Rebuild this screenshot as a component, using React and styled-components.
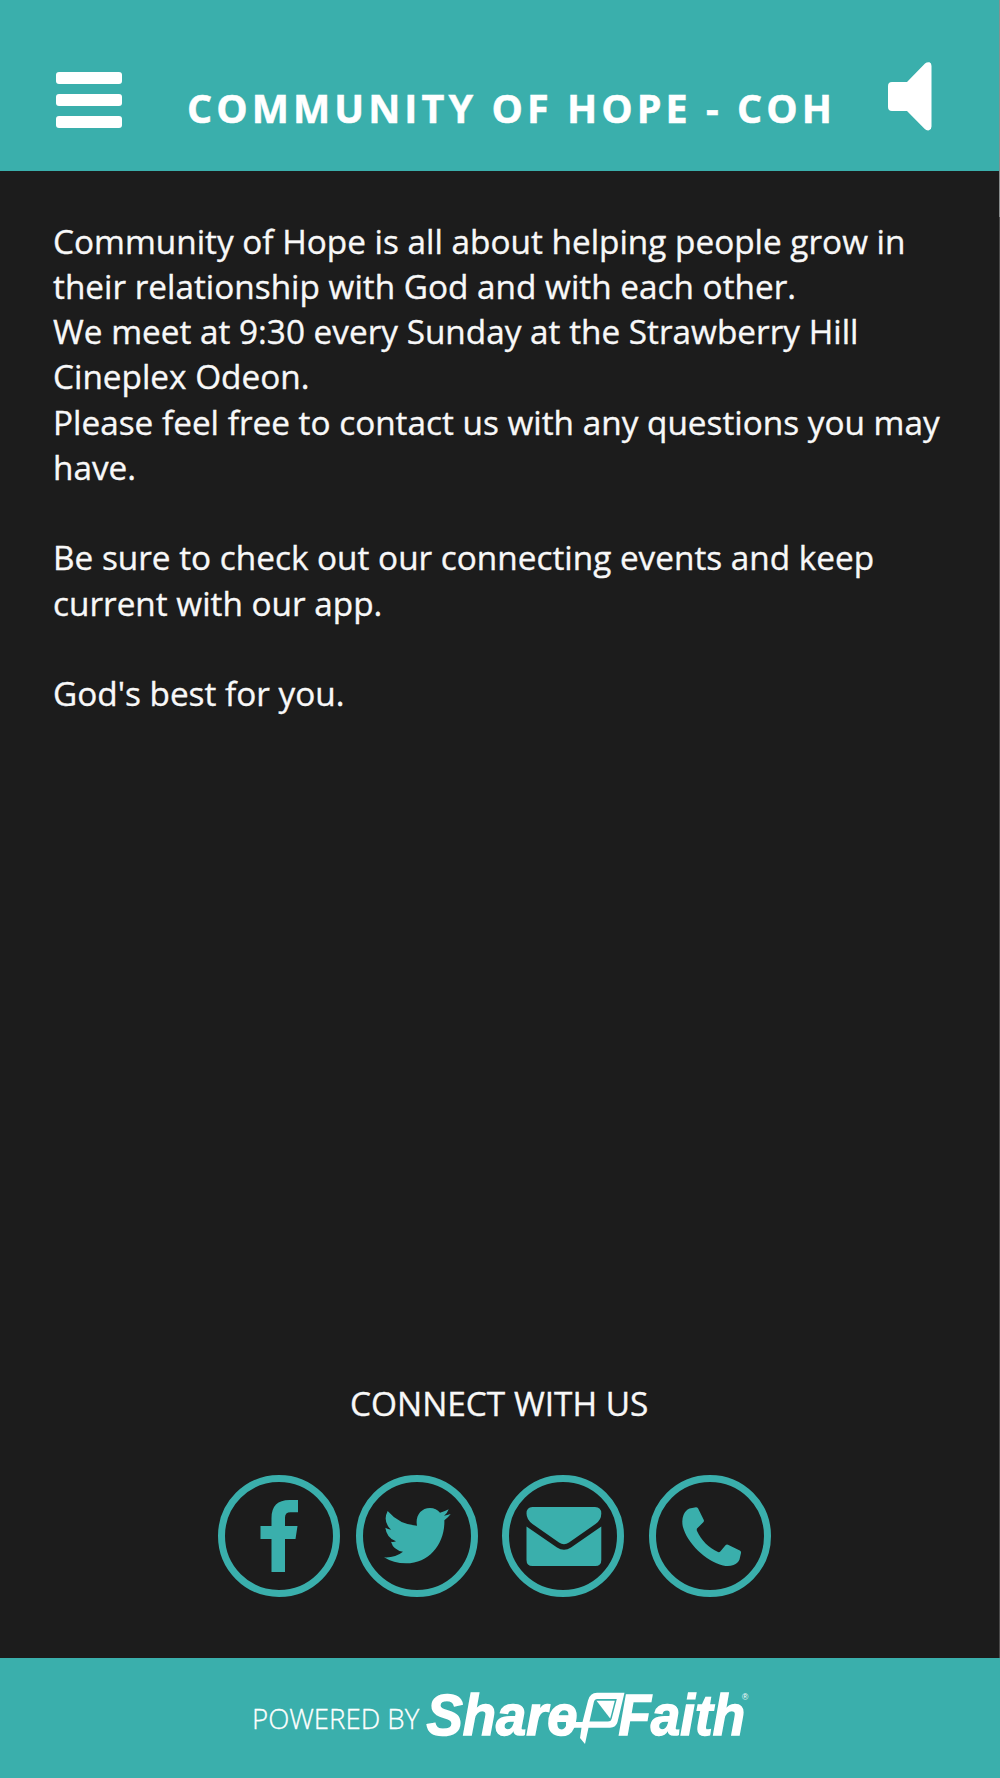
import React from "react";
import styled, { createGlobalStyle, ThemeProvider } from "styled-components";

const theme = {
    color: {
        main: '#3aafac',
        background: '#1c1c1c',
        font1: '#ffffff',
        font2: '#f8f8f8',
        edge1: '#8a8d8d',
        edge2: '#4a4a4a',
    },
    font: `"Open Sans","Noto Sans",sans-serif`,
}

const GlobalStyle = createGlobalStyle`
*{
    box-sizing:border-box;
}
body{
    margin:0;
    background:${theme.color.background};
    font-family:${theme.font};
}
svg{
    display:block;
    flex-shrink:0;
}
`
const Wrappers = styled.div`
display:flex;
flex-direction:column;
width:1000px;
height:1778px;
overflow:hidden;
background:${props => props.theme.color.background};
`
const Header = styled.header`
display:flex;
align-items:flex-start;
height:170.5px;
padding-left:56px;
background:${props => props.theme.color.main};
border-right:1px solid ${props => props.theme.color.edge1};
`
const MenuButton = styled.button`
display:flex;
flex-direction:column;
justify-content:space-between;
width:66px;
height:55.5px;
margin-top:72.3px;
padding:0;
border:none;
background:none;
cursor:pointer;
`
const MenuBar = styled.span`
width:65.6px;
height:11.5px;
border-radius:3px;
background:${props => props.theme.color.font1};
`
const Title = styled.h1`
margin:80px 0 0 65px;
width:701px;
font-size:39.5px;
font-weight:700;
line-height:56px;
letter-spacing:4.05px;
white-space:nowrap;
-webkit-text-stroke:0.5px ${props => props.theme.color.font1};
color:${props => props.theme.color.font1};
`
const SoundButton = styled.button`
margin:62px 0 0 0;
padding:0;
border:none;
background:none;
cursor:pointer;
`
const Content = styled.main`
display:flex;
flex-direction:column;
justify-content:space-between;
flex:1;
padding:48.2px 1px 61px 53px;
background:linear-gradient(${props => props.theme.color.edge1} 46px,${props => props.theme.color.edge2} 46px) right top / 1px 100% no-repeat;
`
const Line = styled.div`
height:45.25px;
font-size:33.35px;
line-height:45.25px;
white-space:nowrap;
-webkit-text-stroke:0.35px ${props => props.theme.color.font2};
color:${props => props.theme.color.font2};
`
const Connect = styled.section`
display:flex;
flex-direction:column;
margin-left:-53px;
`
const ConnectTitle = styled.h2`
margin:0 0 49.5px 350px;
font-size:33.4px;
font-weight:400;
line-height:46px;
white-space:nowrap;
-webkit-text-stroke:0.35px ${props => props.theme.color.font2};
color:${props => props.theme.color.font2};
`
const SocialRow = styled.div`
display:flex;
padding-left:218.3px;
`
const SocialLink = styled.a`
display:flex;
align-items:center;
justify-content:center;
width:122px;
height:122px;
margin-right:${props => props.$gap ?? 0}px;
padding:${props => props.$nudge ?? '0'};
border:7px solid ${props => props.theme.color.main};
border-radius:50%;
color:${props => props.theme.color.main};
`
const Footer = styled.footer`
display:flex;
height:120px;
padding-left:252px;
background:${props => props.theme.color.main};
`
const Powered = styled.span`
width:169px;
margin-top:41px;
font-size:27.6px;
font-weight:300;
line-height:38px;
white-space:nowrap;
-webkit-text-stroke:0.3px ${props => props.theme.color.font1};
color:${props => props.theme.color.font1};
`

const lines = [
    'Community of Hope is all about helping people grow in',
    'their relationship with God and with each other.',
    'We meet at 9:30 every Sunday at the Strawberry Hill',
    'Cineplex Odeon.',
    'Please feel free to contact us with any questions you may',
    'have.',
    '',
    'Be sure to check out our connecting events and keep',
    'current with our app.',
    '',
    "God's best for you.",
]

const SoundIcon = () => (
    <svg width="44" height="69" viewBox="0 0 44 69" fill="#fff">
        <path d="M4 20H19L37 1.600Q39 -.2 41.500.3Q43.500 1 43.500 4V64.500Q43.500 67.500 41 68.300Q38.500 68.800 36.500 66.800L19 49H4Q0 49 0 45V24Q0 20 4 20Z" />
    </svg>
)
const FacebookIcon = () => (
    <svg width="122" height="122" viewBox="0 0 122 122" fill="currentColor">
        <path d="M80 25V37.300H72.500Q67 37.300 67 42.500V51H79.500L77.500 64H67V97H53.500V64H42.500V51H53.500V43Q53.500 25 71.500 25Z" />
    </svg>
)
const TwitterIcon = () => (
    <svg width="66.7" height="55.4" viewBox="552 415 200 166" fill="currentColor">
        <path d="M563 424Q598 465 651 468C645 440 662 415 690 415C702 415 713 420 720 429Q733 426 746 419Q742 431 732 438Q741 437 752 433Q744 444 733 452C735 520 690 581 618 581Q580 581 552 563Q585 565 609 546Q580 541 573 516Q580 518 588 515Q560 505 556 474Q564 479 573 480Q547 455 563 424Z" />
    </svg>
)
const MailIcon = () => (
    <svg width="76" height="60" viewBox="0 0 76 60" fill="currentColor">
        <path d="M6.500 0H69Q75.300 0 75.300 6.500Q75.300 13 69.500 17L43 35.500Q38 39 33 35.500L6.500 17Q.5 12.500 .5 6.500Q.5 0 6.500 0Z" />
        <path d="M.5 19.500L31 40.500Q38 45 45 40.500L75.300 19.500V53Q75.300 59 69.300 59H6.500Q.5 59 .5 53Z" />
    </svg>
)
const PhoneIcon = () => (
    <svg width="60" height="60" viewBox="0 0 60 60" fill="currentColor">
        <path d="M7.500 1.500L14 .2Q15.300 .2 16 1.300L21.800 13Q22.300 14.300 21.300 15.300L15 21.500Q14.500 22.500 15 24C19 33 27 41 36 45Q37.500 45.500 38.500 44.300L43.500 38.300Q44.500 37 46 37.700L57.800 43.500Q59.300 44.300 59 46L57.500 52.500Q56 56 51.500 58Q47 59.800 41 58.500C24 54.500 5 36 .8 19.500Q-.5 13 1.500 8Q3.500 3 7.500 1.500Z" />
    </svg>
)
const Logo = () => (
    <svg width="340" height="120" viewBox="421 1658 340 120" fill="#fff">
        <g fontFamily='"Liberation Sans",Arial,sans-serif' fontWeight="700" fontStyle="italic" fontSize="57.5" stroke="#fff" strokeWidth="1.5">
            <text x="426.5" y="1734.7" textLength="151" lengthAdjust="spacingAndGlyphs">Share</text>
            <text x="618.5" y="1734.7" textLength="126.5" lengthAdjust="spacingAndGlyphs">Faith</text>
        </g>
        <path fillRule="evenodd" d="M566 1722H582.500L588 1700.500Q590 1692.700 597 1692.700H624.500L617.500 1722Q616 1727.700 610 1727.700H588.500L585 1744L580 1738L581.500 1727.700H566ZM597 1699Q594.500 1699 594 1701.500L589.500 1721.500H608Q611 1721.500 611.600 1719L616.800 1699Z" />
        <path d="M596.500 1700.700H614.800L610.200 1718.500Z" />
        <text x="742" y="1700" fontSize="8.5" fontFamily='"Liberation Sans",Arial,sans-serif'>®</text>
    </svg>
)

const App = () => {
    return (
        <ThemeProvider theme={theme}>
            <GlobalStyle />
            <Wrappers>
                <Header>
                    <MenuButton aria-label="Menu">
                        <MenuBar />
                        <MenuBar />
                        <MenuBar />
                    </MenuButton>
                    <Title>COMMUNITY OF HOPE - COH</Title>
                    <SoundButton aria-label="Sound">
                        <SoundIcon />
                    </SoundButton>
                </Header>
                <Content>
                    <div>
                        {lines.map((line, idx) => (
                            <Line key={idx}>{line}</Line>
                        ))}
                    </div>
                    <Connect>
                        <ConnectTitle>CONNECT WITH US</ConnectTitle>
                        <SocialRow>
                            <SocialLink $gap={15.5}><FacebookIcon /></SocialLink>
                            <SocialLink $gap={24.5} $nudge="0 0 0 1px"><TwitterIcon /></SocialLink>
                            <SocialLink $gap={24.5} $nudge="2px 0 0 1px"><MailIcon /></SocialLink>
                            <SocialLink $nudge="1px 0 0 5px"><PhoneIcon /></SocialLink>
                        </SocialRow>
                    </Connect>
                </Content>
                <Footer>
                    <Powered>POWERED BY</Powered>
                    <Logo />
                </Footer>
            </Wrappers>
        </ThemeProvider>
    )
}
export default App;
